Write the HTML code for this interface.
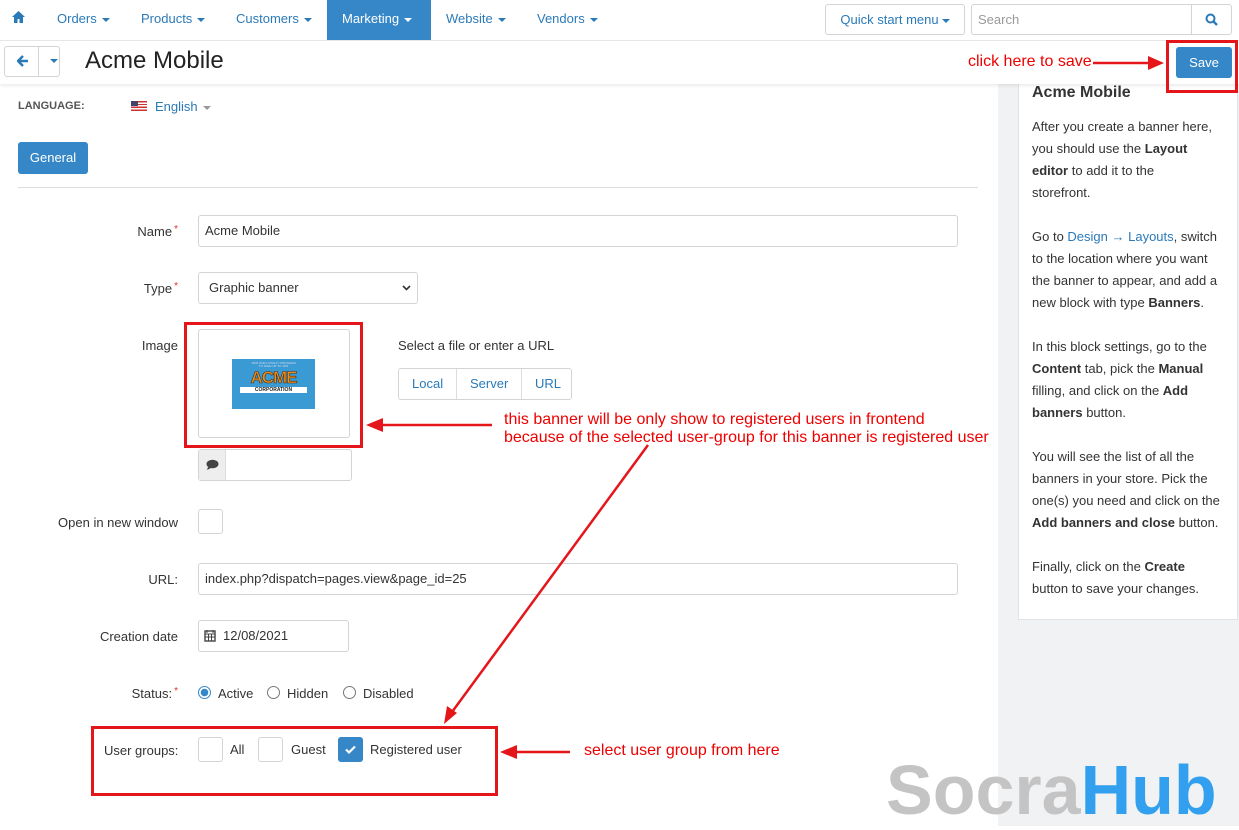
<!DOCTYPE html>
<html><head><meta charset="utf-8">
<style>
*{box-sizing:border-box;margin:0;padding:0}
body{width:1239px;height:826px;overflow:hidden;background:#fff;font-family:"Liberation Sans",sans-serif;font-size:13px;color:#333;position:relative}
.a{position:absolute}
.nav{left:0;top:0;width:1239px;height:41px;background:#fff;border-bottom:1px solid #e6e6e6}
.ni{top:0;height:40px;line-height:37px;color:#2a7ab8;font-size:13px}
.car{display:inline-block;width:0;height:0;border-left:4px solid transparent;border-right:4px solid transparent;border-top:4px solid currentColor;vertical-align:middle;margin-left:5px}
.inp{border:1px solid #d4d4d4;border-radius:3px;background:#fff}
.lbl{text-align:right;width:178px;left:0;font-size:13px;color:#333}
.req{color:#d33;font-size:10px;vertical-align:top;margin-left:2px}
.red{color:#e00;font-size:16px}
.rbox{border:3px solid #e5161a}
.side p{margin-bottom:22px;white-space:nowrap}
</style></head><body>
<div class="a" style="left:998px;top:84px;width:241px;height:742px;background:#f0f2f4"></div>
<div class="a side" style="left:1018px;top:72px;width:220px;height:548px;background:#fff;border:1px solid #e3e3e3;padding:9px 13px;line-height:22px;font-size:13px">
<div style="font-size:16px;font-weight:bold;margin-bottom:12px">Acme Mobile</div>
<p>After you create a banner here,<br>you should use the <b>Layout</b><br><b>editor</b> to add it to the<br>storefront.</p>
<p>Go to <span style="color:#2a7ab8">Design → Layouts</span>, switch<br>to the location where you want<br>the banner to appear, and add a<br>new block with type <b>Banners</b>.</p>
<p>In this block settings, go to the<br><b>Content</b> tab, pick the <b>Manual</b><br>filling, and click on the <b>Add</b><br><b>banners</b> button.</p>
<p>You will see the list of all the<br>banners in your store. Pick the<br>one(s) you need and click on the<br><b>Add banners and close</b> button.</p>
<p>Finally, click on the <b>Create</b><br>button to save your changes.</p></div>

<div class="a nav"></div>
<div class="a ni" style="left:12px"><svg width="13" height="12" viewBox="0 0 13 12"><path d="M6.5 0L0 6h2v6h3.5V8h2v4H11V6h2z" fill="#2a7ab8"/></svg></div>
<div class="a ni" style="left:57px">Orders<span class="car"></span></div>
<div class="a ni" style="left:141px">Products<span class="car"></span></div>
<div class="a ni" style="left:236px">Customers<span class="car"></span></div>
<div class="a ni" style="left:327px;width:104px;background:#3587c8;color:#fff;padding-left:15px">Marketing<span class="car"></span></div>
<div class="a ni" style="left:446px">Website<span class="car"></span></div>
<div class="a ni" style="left:537px">Vendors<span class="car"></span></div>
<div class="a inp" style="left:825px;top:4px;width:140px;height:31px;line-height:29px;text-align:center;color:#2a7ab8">Quick start menu<span class="car" style="margin-left:3px"></span></div>
<div class="a inp" style="left:971px;top:4px;width:261px;height:31px;line-height:29px;padding-left:6px;color:#999">Search</div>
<div class="a" style="left:1191px;top:5px;width:1px;height:29px;background:#d4d4d4"></div>
<svg class="a" style="left:1205px;top:13px" width="13" height="13" viewBox="0 0 13 13"><circle cx="5.5" cy="5.5" r="4" fill="none" stroke="#2a7ab8" stroke-width="2"/><path d="M8.5 8.5L12 12" stroke="#2a7ab8" stroke-width="2.4"/></svg>

<div class="a" style="left:0;top:41px;width:1239px;height:43px;background:#fff;box-shadow:0 2px 3px rgba(0,0,0,.08)"></div>
<div class="a inp" style="left:4px;top:46px;width:56px;height:31px"></div>
<div class="a" style="left:38px;top:47px;width:1px;height:29px;background:#d4d4d4"></div>
<svg class="a" style="left:17px;top:55px" width="12" height="12" viewBox="0 0 12 12"><path d="M6 1L1 6l5 5M1 6h10" fill="none" stroke="#2a7ab8" stroke-width="2.4"/></svg>
<span class="a car" style="left:50px;top:59px;color:#2a7ab8;margin:0"></span>
<div class="a" style="left:85px;top:47px;font-size:24px;color:#222">Acme Mobile</div>
<div class="a" style="left:1176px;top:47px;width:56px;height:31px;background:#3587c8;border-radius:3px;color:#fff;text-align:center;line-height:31px">Save</div>
<div class="a rbox" style="left:1166px;top:40px;width:72px;height:53px"></div>
<div class="a red" style="left:968px;top:53px">click here to save</div>

<div class="a" style="left:18px;top:100px;font-size:11px;font-weight:bold;color:#555">LANGUAGE:</div>
<div class="a" style="left:131px;top:101px;width:16px;height:10px;background:repeating-linear-gradient(#c33 0 1.4px,#fff 1.4px 2.8px)"><div style="width:7px;height:5px;background:#446"></div></div>
<div class="a" style="left:155px;top:99px;color:#2a7ab8">English<span class="car" style="color:#999"></span></div>
<div class="a" style="left:18px;top:142px;width:70px;height:32px;background:#3587c8;border-radius:3px;color:#fff;text-align:center;line-height:32px">General</div>
<div class="a" style="left:18px;top:187px;width:960px;height:1px;background:#ddd"></div>

<div class="a lbl" style="top:224px">Name<span class="req">*</span></div>
<div class="a inp" style="left:198px;top:215px;width:760px;height:32px;line-height:30px;padding-left:6px">Acme Mobile</div>
<div class="a lbl" style="top:281px">Type<span class="req">*</span></div>
<div class="a inp" style="left:198px;top:272px;width:220px;height:32px;line-height:30px;padding-left:10px">Graphic banner<svg style="position:absolute;right:6px;top:12px" width="9" height="6"><path d="M1 1l3.5 3.5L8 1" fill="none" stroke="#333" stroke-width="1.6"/></svg></div>
<div class="a lbl" style="top:338px">Image</div>
<div class="a inp" style="left:198px;top:329px;width:152px;height:109px"></div>
<div class="a" style="left:232px;top:359px;width:83px;height:50px;background:#3a9ad4;text-align:center">
<div style="font-size:3px;color:#dde;padding-top:3px;line-height:3px">JOIN OUR LOYALTY PROGRAM<br>TO SAVE UP TO 15%</div>
<div style="font-size:17px;font-weight:bold;color:#e89020;line-height:16px;margin-top:2px;letter-spacing:-1px;-webkit-text-stroke:.6px #4a2a10">ACME</div>
<div style="font-size:5px;font-weight:bold;background:#fff;color:#222;margin:1px 8px 0;line-height:6px">CORPORATION</div></div>
<div class="a inp" style="left:198px;top:449px;width:154px;height:32px"></div>
<div class="a" style="left:199px;top:450px;width:27px;height:30px;background:#eee;border-right:1px solid #ddd"></div>
<svg class="a" style="left:206px;top:459px" width="13" height="12" viewBox="0 0 13 12"><ellipse cx="6.5" cy="5" rx="6" ry="4.3" fill="#444"/><path d="M2 8L1 11l4-2z" fill="#444"/></svg>
<div class="a" style="left:398px;top:338px">Select a file or enter a URL</div>
<div class="a inp" style="left:398px;top:368px;width:174px;height:32px;color:#2a7ab8;line-height:30px">
<span class="a" style="left:13px">Local</span><span class="a" style="left:57px;top:0;width:1px;height:30px;background:#ddd"></span><span class="a" style="left:71px">Server</span><span class="a" style="left:122px;top:0;width:1px;height:30px;background:#ddd"></span><span class="a" style="left:136px">URL</span></div>
<div class="a rbox" style="left:184px;top:322px;width:179px;height:126px"></div>
<div class="a red" style="left:504px;top:411px;line-height:18px">this banner will be only show to registered users in frontend<br>because of the selected user-group for this banner is registered user</div>

<div class="a lbl" style="top:515px">Open in new window</div>
<div class="a inp" style="left:198px;top:509px;width:25px;height:25px"></div>
<div class="a lbl" style="top:572px">URL:</div>
<div class="a inp" style="left:198px;top:563px;width:760px;height:32px;line-height:30px;padding-left:6px">index.php?dispatch=pages.view&amp;page_id=25</div>
<div class="a lbl" style="top:629px">Creation date</div>
<div class="a inp" style="left:198px;top:620px;width:151px;height:32px;line-height:30px;padding-left:24px">12/08/2021</div>
<svg class="a" style="left:204px;top:629px" width="12" height="13" viewBox="0 0 12 13"><rect x="1" y="2" width="10" height="10" fill="none" stroke="#444" stroke-width="1.4"/><path d="M1 5h10M3 1v3M9 1v3M1 8h10M4.5 5v7M7.5 5v7" stroke="#444"/></svg>
<div class="a lbl" style="top:686px">Status:<span class="req">*</span></div>
<div class="a" style="left:198px;top:686px;width:13px;height:13px;border:1px solid #3587c8;border-radius:50%;background:radial-gradient(#3587c8 3.5px,#fff 4px)"></div>
<div class="a" style="left:218px;top:686px">Active</div>
<div class="a" style="left:267px;top:686px;width:13px;height:13px;border:1px solid #777;border-radius:50%"></div>
<div class="a" style="left:287px;top:686px">Hidden</div>
<div class="a" style="left:343px;top:686px;width:13px;height:13px;border:1px solid #777;border-radius:50%"></div>
<div class="a" style="left:363px;top:686px">Disabled</div>
<div class="a" style="left:104px;top:743px">User groups:</div>
<div class="a inp" style="left:198px;top:737px;width:25px;height:25px"></div>
<div class="a" style="left:230px;top:742px">All</div>
<div class="a inp" style="left:258px;top:737px;width:25px;height:25px"></div>
<div class="a" style="left:291px;top:742px">Guest</div>
<div class="a" style="left:338px;top:737px;width:25px;height:25px;background:#3587c8;border-radius:3px"></div>
<svg class="a" style="left:344px;top:744px" width="13" height="11"><path d="M2 5.5l3 3 6-6" fill="none" stroke="#fff" stroke-width="2.2"/></svg>
<div class="a" style="left:370px;top:742px">Registered user</div>
<div class="a rbox" style="left:91px;top:726px;width:407px;height:70px"></div>
<div class="a red" style="left:584px;top:742px">select user group from here</div>

<div class="a" style="left:886px;top:750px;font-size:70px;font-weight:bold;line-height:80px;color:#c4c4c4">Socra<span style="color:#32a0ee">Hub</span></div>

<svg class="a" style="left:0;top:0" width="1239" height="826">
<g stroke="#e5161a" stroke-width="2.5" fill="#e5161a">
<line x1="1093" y1="63" x2="1150" y2="63"/><path d="M1164 63l-16-7v14z" stroke="none"/>
<line x1="492" y1="425" x2="382" y2="425"/><path d="M366 425l17-7v14z" stroke="none"/>
<line x1="648" y1="445" x2="452" y2="712"/><path d="M444 724l3-18 10 7z" stroke="none"/>
<line x1="570" y1="752" x2="516" y2="752"/><path d="M500 752l17-7v14z" stroke="none"/>
</g></svg>
</body></html>
